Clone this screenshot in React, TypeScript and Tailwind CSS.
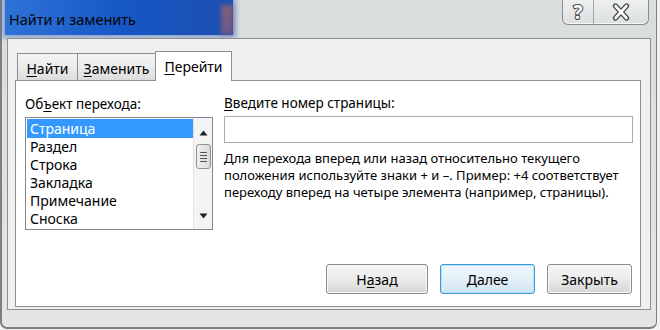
import React from "react"

// Win7-style "Найти и заменить" dialog, tab "Перейти"

function Acc({ text, at }: { text: string; at: number }) {
  if (at < 0) return <>{text}</>
  return (
    <>
      {text.slice(0, at)}
      <span className="underline underline-offset-[2px]">{text[at]}</span>
      {text.slice(at + 1)}
    </>
  )
}

function Tab({ label, width, active }: { label: string; width: string; active?: boolean }) {
  if (active) {
    return (
      <div
        className={`${width} h-[30px] -mb-px -ml-px relative z-10 bg-white border border-b-0 border-[#8e8f8f] flex items-center justify-center pb-[1px] text-[14px] text-[#000]`}
      >
        <Acc text={label} at={0} />
      </div>
    )
  }
  return (
    <div
      className={`${width} h-[27px] -ml-px first:ml-0 bg-gradient-to-b from-[#f4f4f4] via-[#ececec] to-[#dcdcdc] border border-b-0 border-[#8e8f8f] flex items-center justify-center pt-[2px] text-[14px] text-[#000]`}
    >
      <Acc text={label} at={0} />
    </div>
  )
}

function Btn({ label, at, width, def }: { label: string; at: number; width: string; def?: boolean }) {
  return (
    <div
      className={`${width} h-[30px] rounded-[3px] border flex items-center justify-center text-[14px] text-[#000] ${
        def
          ? "border-[#3c9ad8] bg-gradient-to-b from-[#f0f8fd] via-[#e3f0f9] to-[#cfe3f1] shadow-[inset_0_0_0_1px_#b9e0f7]"
          : "border-[#8a8a8a] bg-gradient-to-b from-[#f6f6f6] via-[#ebebeb] to-[#d6d6d6] shadow-[inset_0_0_0_1px_#fbfbfb]"
      }`}
    >
      <Acc text={label} at={at} />
    </div>
  )
}

const items = ["Страница", "Раздел", "Строка", "Закладка", "Примечание", "Сноска"]

export default function App() {
  return (
    <div className="w-[660px] h-[330px] bg-[#f2f3f3] overflow-hidden font-['Noto_Sans',sans-serif]">
      <div className="w-[657px] h-[329px] bg-gradient-to-b from-[#dadddd] to-[#e4e6e6] border-l-2 border-r border-b-2 border-[#7d7f80] rounded-b-[7px] flex flex-col">
        {/* title bar */}
        <div className="h-[38px] shrink-0 flex items-start">
          <div className="w-[228px] h-[35px] ml-[3px] bg-gradient-to-r from-[#2f73d8] via-[#1657c6] to-[#1c4fb0] shadow-[0_0_5px_3px_rgba(40,90,190,0.45)] flex items-center pl-[4px] pt-[5px] text-[14.5px] text-[#050505]">
            <div className="flex-1">Найти и заменить</div>
            <div className="w-[12px] h-[30px] bg-gradient-to-b from-[#b0675c] to-[#8b5a7a] opacity-70 blur-[2px]" />
          </div>
          <div className="flex-1" />
          <div className="flex mr-[7px] h-[25px] border border-t-0 border-[#8a8c8d] rounded-b-[6px] bg-gradient-to-b from-[#eef0f0] to-[#dde0e0] shadow-[inset_0_-1px_0_#f8f8f8]">
            <div className="w-[31px] border-r border-[#a3a5a6] flex items-center justify-center text-[19px] font-bold leading-none text-white [-webkit-text-stroke:2px_#3f4446] [paint-order:stroke_fill]">
              ?
            </div>
            <div className="w-[54px] flex items-center justify-center">
              <svg width="18" height="18" viewBox="0 0 18 18">
                <path d="M3.5 3 L14.5 15 M14.5 3 L3.5 15" stroke="#3f4446" strokeWidth="5.2" strokeLinecap="round" />
                <path d="M3.5 3 L14.5 15 M14.5 3 L3.5 15" stroke="#ffffff" strokeWidth="2.6" strokeLinecap="round" />
              </svg>
            </div>
          </div>
        </div>

        {/* client area */}
        <div className="ml-[5px] w-[644px] h-[272px] border border-[#8c8e8f] bg-[#f0f0f0] pt-[12px] pl-[7px] flex flex-col">
          <div className="flex items-end h-[29px] ml-[2px]">
            <Tab label="Найти" width="w-[61px]" />
            <Tab label="Заменить" width="w-[79px]" />
            <Tab label="Перейти" width="w-[77px]" active />
          </div>

          <div className="w-[626px] h-[227px] bg-white border border-[#8e8f8f] flex flex-col pl-[9px] pr-[7px] pt-[15px] pb-[12px] text-[#000]">
            <div className="flex gap-[11px]">
              <div className="w-[188px] flex flex-col">
                <div className="h-[17px] text-[13.5px] leading-[17px] mb-[4px]">
                  <Acc text="Объект перехода:" at={2} />
                </div>
                <div className="h-[113px] border border-[#848892] flex">
                  <div className="flex-1 pt-[1px] pl-px">
                    {items.map((it, i) => (
                      <div
                        key={it}
                        className={`pl-[3px] text-[14px] ${
                          i === 0 ? "bg-[#3399ff] text-white h-[19px] leading-[19px]" : "h-[18px] leading-[18px]"
                        }`}
                      >
                        {it}
                      </div>
                    ))}
                  </div>
                  <div className="w-[19px] border-l border-[#e2e2e2] bg-[#f4f4f4] flex flex-col items-center">
                    <svg className="mt-[12px]" width="9" height="6" viewBox="0 0 9 6">
                      <path d="M4.5 0.5 L8.5 5.5 L0.5 5.5 Z" fill="#222" />
                    </svg>
                    <div className="mt-[8px] w-[15px] h-[25px] rounded-[3px] border border-[#8f9194] bg-gradient-to-r from-[#f1f1f1] to-[#d9d9d9] flex flex-col items-center justify-center gap-[2px]">
                      <div className="w-[7px] h-px bg-[#555]" />
                      <div className="w-[7px] h-px bg-[#555]" />
                      <div className="w-[7px] h-px bg-[#555]" />
                      <div className="w-[7px] h-px bg-[#555]" />
                    </div>
                    <div className="flex-1" />
                    <svg className="mb-[10px]" width="9" height="6" viewBox="0 0 9 6">
                      <path d="M0.5 0.5 L8.5 0.5 L4.5 5.5 Z" fill="#222" />
                    </svg>
                  </div>
                </div>
              </div>

              <div className="flex-1 flex flex-col">
                <div className="h-[17px] text-[13.5px] leading-[17px] mb-[4px] -mt-px">
                  <Acc text="Введите номер страницы:" at={0} />
                </div>
                <div className="w-[409px] h-[27px] border border-[#a9acb2] bg-white" />
                <div className="mt-[7px] text-[13px] leading-[17px]">
                  Для перехода вперед или назад относительно текущего
                  <br />
                  положения используйте знаки + и –. Пример: +4 соответствует
                  <br />
                  переходу вперед на четыре элемента (например, страницы).
                </div>
              </div>
            </div>

            <div className="mt-auto flex justify-end gap-[12px] pr-px">
              <Btn label="Назад" at={1} width="w-[102px]" />
              <Btn label="Далее" at={0} width="w-[95px]" def />
              <Btn label="Закрыть" at={-1} width="w-[85px]" />
            </div>
          </div>
        </div>
      </div>
    </div>
  )
}
